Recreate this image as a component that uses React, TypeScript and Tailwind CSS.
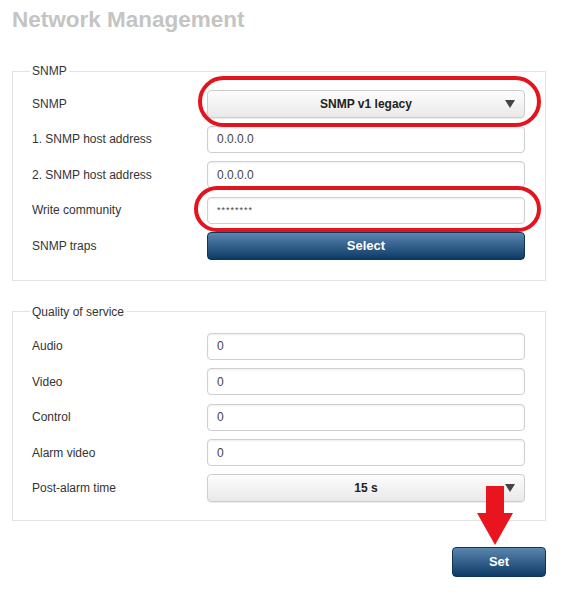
import type { ReactNode } from "react";

const font = { fontFamily: '"Liberation Sans", Arial, sans-serif' };

function Row({ label, children }: { label: string; children: ReactNode }) {
  return (
    <div className="flex h-[35.5px] items-center">
      <div className="w-[175px] shrink-0 text-[12px] text-[#333]">{label}</div>
      <div className="flex-1">{children}</div>
    </div>
  );
}

function TextInput({ value, small }: { value: string; small?: boolean }) {
  return (
    <div
      className={`flex h-[27px] items-center rounded-[4px] border border-[#cfcfcf] bg-white px-[9px] text-[#444] shadow-[inset_0_1px_2px_rgba(0,0,0,0.08)] ${
        small ? "text-[9px] tracking-[1px]" : "text-[12px]"
      }`}
    >
      {value}
    </div>
  );
}

function SelectBox({ value }: { value: string }) {
  return (
    <div className="relative flex h-[28px] items-center justify-center rounded-[4px] border border-[#cdcdcd] bg-gradient-to-b from-[#fdfdfd] to-[#e9e9e9] text-[12px] font-bold text-[#222] shadow-[0_1px_1px_rgba(0,0,0,0.08)]">
      {value}
      <span className="absolute right-[9px] top-1/2 h-0 w-0 -translate-y-1/2 border-x-[5px] border-t-[8px] border-x-transparent border-t-[#444]" />
    </div>
  );
}

function BlueButton({ label, className = "" }: { label: string; className?: string }) {
  return (
    <div
      className={`flex items-center justify-center rounded-[4px] border border-[#0d3557] bg-gradient-to-b from-[#5a86b0] to-[#0b3b67] text-[13px] font-bold text-white ${className}`}
    >
      {label}
    </div>
  );
}

function Group({ title, children, className = "pb-[16px] pt-[6px]" }: { title: string; children: ReactNode; className?: string }) {
  return (
    <fieldset className={`relative border border-[#e3e3e3] pl-[19px] pr-[20px] ${className}`}>
      <legend className="-ml-[2px] px-[2px] text-[12px] text-[#333]">{title}</legend>
      {children}
    </fieldset>
  );
}

export default function App() {
  return (
    <div className="h-[604px] w-[580px] bg-white pl-[12px] pt-[7px]" style={font}>
      <h1 className="text-[22.5px] font-bold leading-[26px] text-[#c4c4c4]">Network Management</h1>

      <div className="mt-[29px] w-[534px]">
        <Group title="SNMP">
          <Row label="SNMP">
            <SelectBox value="SNMP v1 legacy" />
          </Row>
          <Row label="1. SNMP host address">
            <TextInput value="0.0.0.0" />
          </Row>
          <Row label="2. SNMP host address">
            <TextInput value="0.0.0.0" />
          </Row>
          <Row label="Write community">
            <TextInput value="********" small />
          </Row>
          <Row label="SNMP traps">
            <BlueButton label="Select" className="h-[28px]" />
          </Row>

          {/* annotation rings */}
          <div className="pointer-events-none absolute left-[185px] top-[-4px] h-[51px] w-[343px] rounded-[26px] border-[4px] border-[#e3141d]" />
          <div className="pointer-events-none absolute left-[181px] top-[106px] h-[46px] w-[347px] rounded-[23px] border-[4px] border-[#e3141d]" />
        </Group>

        <div className="h-[22px]" />

        <Group title="Quality of service" className="pb-[14px] pt-[8px]">
          <Row label="Audio">
            <TextInput value="0" />
          </Row>
          <Row label="Video">
            <TextInput value="0" />
          </Row>
          <Row label="Control">
            <TextInput value="0" />
          </Row>
          <Row label="Alarm video">
            <TextInput value="0" />
          </Row>
          <Row label="Post-alarm time">
            <SelectBox value="15 s" />
          </Row>
        </Group>

        <div className="relative mt-[26px] flex justify-end">
          <svg
            className="absolute left-[463px] top-[-61px]"
            width="40"
            height="62"
            viewBox="0 0 40 62"
          >
            <path d="M11 0 H29 V27 H38 L20 59 L2 27 H11 Z" fill="#e8141e" />
          </svg>
          <BlueButton label="Set" className="h-[30px] w-[94px]" />
        </div>
      </div>
    </div>
  );
}
